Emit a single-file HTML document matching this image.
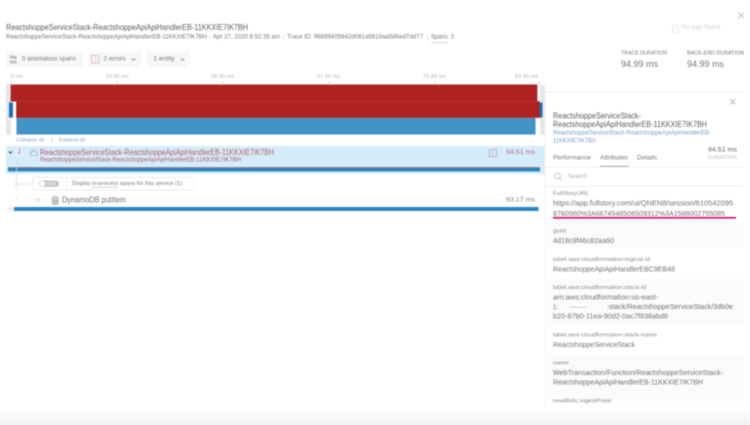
<!DOCTYPE html>
<html><head><meta charset="utf-8"><style>
html,body{margin:0;padding:0;background:#fff;width:750px;height:425px;overflow:hidden}
svg{display:block;filter:blur(.45px)}
text{font-family:"Liberation Sans",sans-serif;font-size:6px;fill:#777;dominant-baseline:central}
.t{font-size:8.4px;fill:#5c5c5c}
.a{font-size:5.4px;fill:#b5b5b5}
.l{font-size:5.8px;fill:#888}
.v{font-size:7.6px;fill:#727272}
</style></head><body>
<svg width="750" height="425" viewBox="0 0 750 425" xmlns="http://www.w3.org/2000/svg">
<defs><linearGradient id="g" x1="0" y1="0" x2="0" y2="1"><stop offset="0" stop-color="#fff"/><stop offset="1" stop-color="#f1f2f2"/></linearGradient></defs>
<rect width="750" height="425" fill="#fff"/>

<!-- header -->
<text class="t" x="6" y="27" textLength="242" lengthAdjust="spacingAndGlyphs">ReactshoppeServiceStack-ReactshoppeApiApiHandlerEB-11KKXIE7IK7BH</text>
<text x="6" y="37.5" textLength="201" lengthAdjust="spacingAndGlyphs">ReactshoppeServiceStack-ReactshoppeApiApiHandlerEB-11KKXIE7IK7BH</text>
<rect x="209.5" y="35" width=".6" height="5" fill="#ccc"/>
<text x="213" y="37.5" textLength="67" lengthAdjust="spacingAndGlyphs">Apr 27, 2020 8:52:35 am</text>
<rect x="283" y="35" width=".6" height="5" fill="#ccc"/>
<text x="287" y="37.5" textLength="136" lengthAdjust="spacingAndGlyphs">Trace ID: 96889405842d081a5618aa586ed7dd77</text>
<rect x="427" y="35" width=".6" height="5" fill="#ccc"/>
<text x="431" y="37.5" textLength="23" lengthAdjust="spacingAndGlyphs">Spans: 3</text>
<rect x="431" y="42" width="17" height=".6" fill="#bbb"/>

<!-- close + logs -->
<path d="M738 12.5l6 6M744 12.5l-6 6" stroke="#aaa" stroke-width=".6" fill="none"/>
<path d="M672.5 25h3.5l1.8 1.8v5.7h-5.3z" fill="none" stroke="#ddd" stroke-width=".6"/>
<text x="682" y="28" textLength="38" lengthAdjust="spacingAndGlyphs" style="fill:#d2d2d2">No logs found</text>
<text x="621" y="53.5" textLength="46" lengthAdjust="spacingAndGlyphs" style="font-size:5px;fill:#777">TRACE DURATION</text>
<text x="687" y="53.5" textLength="57" lengthAdjust="spacingAndGlyphs" style="font-size:5px;fill:#777">BACK-END DURATION</text>
<text x="621" y="64" textLength="37" lengthAdjust="spacingAndGlyphs" style="font-size:9px;fill:#757575">94.99 ms</text>
<text x="687" y="64" textLength="37" lengthAdjust="spacingAndGlyphs" style="font-size:9px;fill:#757575">94.99 ms</text>

<!-- buttons -->
<rect x="6" y="52" width="77" height="15" rx="1.5" fill="#f6f7f7"/>
<rect x="88" y="52" width="54" height="15" rx="1.5" fill="#f6f7f7"/>
<rect x="146" y="52" width="44" height="15" rx="1.5" fill="#f6f7f7"/>
<g fill="none" stroke="#888" stroke-width=".6">
<circle cx="11.5" cy="57" r="1.2"/><path d="M15 55.8l1.4 2.4h-2.8z"/><circle cx="11.5" cy="62" r="1.2"/><circle cx="15" cy="62" r="1.2"/>
</g>
<text x="22" y="59.5" textLength="54" lengthAdjust="spacingAndGlyphs">0 anomalous spans</text>
<rect x="91.5" y="55.5" width="7.5" height="7.5" fill="none" stroke="#dca5a5" stroke-width=".7"/>
<path d="M95.2 57v3M95.2 61v.8" stroke="#dca5a5" stroke-width=".6"/>
<text x="103.5" y="59.5" textLength="22" lengthAdjust="spacingAndGlyphs">2 errors</text>
<path d="M131.5 58.6l2 1.8 2-1.8" fill="none" stroke="#777" stroke-width=".7"/>
<text x="153.5" y="59.5" textLength="21" lengthAdjust="spacingAndGlyphs">1 entity</text>
<path d="M180.5 58.6l2 1.8 2-1.8" fill="none" stroke="#777" stroke-width=".7"/>

<!-- axis -->
<text class="a" x="11" y="77" textLength="12" lengthAdjust="spacingAndGlyphs">0 ms</text>
<text class="a" x="105.5" y="77" textLength="23" lengthAdjust="spacingAndGlyphs">19.00 ms</text>
<text class="a" x="211" y="77" textLength="23" lengthAdjust="spacingAndGlyphs">38.00 ms</text>
<text class="a" x="317" y="77" textLength="23" lengthAdjust="spacingAndGlyphs">57.00 ms</text>
<text class="a" x="423" y="77" textLength="23" lengthAdjust="spacingAndGlyphs">75.99 ms</text>
<text class="a" x="515" y="77" textLength="23" lengthAdjust="spacingAndGlyphs">94.99 ms</text>
<rect x="6" y="84" width="534" height=".7" fill="#ccc"/>
<g fill="#bbb"><rect x="11" y="81" width=".6" height="3"/><rect x="116.5" y="81" width=".6" height="3"/><rect x="222.5" y="81" width=".6" height="3"/><rect x="328.5" y="81" width=".6" height="3"/><rect x="434.5" y="81" width=".6" height="3"/><rect x="539" y="81" width=".6" height="3"/></g>

<!-- minimap -->
<rect x="6" y="85" width="5" height="50" fill="#e5e7e7"/>
<rect x="540" y="85" width="5" height="50" fill="#e6e7e7"/>
<rect x="11" y="85" width="526" height="16.5" fill="#ae2222" stroke="#b01010" stroke-width=".6"/>
<rect x="11" y="101.5" width="6" height="33" fill="#fff"/>
<rect x="16.5" y="101.5" width="523" height="16" fill="#ae2222" stroke="#b01010" stroke-width=".6"/>
<rect x="16.5" y="101.2" width="521" height=".5" fill="#c24a4a"/>
<rect x="16.5" y="118" width="519" height="16.5" fill="#4293c6"/>
<rect x="9" y="102.5" width="4" height="15" fill="#1a73b8"/>
<rect x="539.5" y="102.5" width="3" height="15" fill="#1a73b8"/>

<!-- links -->
<text x="16" y="140.5" textLength="28" lengthAdjust="spacingAndGlyphs" style="font-size:5.4px;fill:#8aa5cc">Collapse all</text>
<rect x="51.5" y="138" width=".6" height="4.5" fill="#bbb"/>
<text x="59" y="140.5" textLength="26" lengthAdjust="spacingAndGlyphs" style="font-size:5.4px;fill:#8aa5cc">Expand all</text>

<!-- selected row -->
<rect x="6" y="146" width="539" height="28" fill="#d5ecfa"/>
<rect x="15.5" y="148.5" width="8" height="8" fill="#e2f2fc"/>
<path d="M8.7 151.5l1.7 1.6 1.7-1.6" fill="none" stroke="#444" stroke-width=".9"/>
<text x="17.8" y="152.5" style="font-size:6px;fill:#b2535f">2</text>
<path d="M31.5 155.5h4.7a1.6 1.6 0 0 0 .2-3.1 2.4 2.4 0 0 0-4.5-.6 1.9 1.9 0 0 0-.4 3.7z" fill="none" stroke="#b98a95" stroke-width=".6"/>
<text x="40" y="152.5" textLength="234" lengthAdjust="spacingAndGlyphs" style="font-size:8px;fill:#b65c69">ReactshoppeServiceStack-ReactshoppeApiApiHandlerEB-11KKXIE7IK7BH</text>
<text x="40" y="160.5" textLength="201" lengthAdjust="spacingAndGlyphs" style="fill:#b65c69">ReactshoppeServiceStack-ReactshoppeApiApiHandlerEB-11KKXIE7IK7BH</text>
<rect x="489.5" y="149.5" width="7" height="7" fill="none" stroke="#b79aa8" stroke-width=".7"/>
<path d="M493 151v2.4M493 154.2v.8" stroke="#b79aa8" stroke-width=".6"/>
<text x="506" y="152.5" textLength="29" lengthAdjust="spacingAndGlyphs" style="font-size:6.4px;fill:#b86d78">94.51 ms</text>
<rect x="8" y="167.5" width="532" height="4" fill="#2e86bd"/>
<rect x="8" y="167.2" width="532" height=".7" fill="#a5606a"/>

<!-- tree -->
<path d="M16.5 157v27" stroke="#ddd" stroke-width=".7" fill="none"/>
<path d="M16.5 184v16h20" stroke="#ccc" stroke-width=".6" stroke-dasharray="1 1" fill="none"/>
<path d="M18 184h15" stroke="#ddd" stroke-width=".7"/>
<circle cx="16.5" cy="184" r="1.5" fill="#fff" stroke="#ccc" stroke-width=".6"/>
<circle cx="38" cy="200" r="1.6" fill="#fff" stroke="#ccc" stroke-width=".6"/>

<!-- toggle row -->
<rect x="33" y="177.5" width="161" height="12.5" rx="1" fill="#fff" stroke="#e8e8e8" stroke-width=".7"/>
<rect x="66.5" y="177.5" width=".6" height="12.5" fill="#e8e8e8"/>
<rect x="39" y="180.5" width="20" height="6.5" rx="3.2" fill="#c4c6c6"/>
<circle cx="42.5" cy="183.7" r="3" fill="#fff" stroke="#bbb" stroke-width=".4"/>
<text x="47" y="183.8" style="font-size:4.5px;fill:#fff">OFF</text>
<text x="72" y="184" textLength="110" lengthAdjust="spacingAndGlyphs" style="font-size:5.8px">Display in-process spans for this service (1)</text>
<rect x="92" y="187" width="26" height=".5" fill="#aaa"/>

<!-- dynamo row -->
<path d="M52.5 198c0-2 5.5-2 5.5 0v5.5c0 1.4-5.5 1.4-5.5 0z" fill="#d0d2d2" stroke="#888" stroke-width=".6"/>
<path d="M52.5 200.5h5.5M52.5 202h5.5" stroke="#888" stroke-width=".4"/>
<text x="62" y="200" textLength="64" lengthAdjust="spacingAndGlyphs" style="font-size:7.8px;fill:#707070">DynamoDB putItem</text>
<text x="506" y="200" textLength="29" lengthAdjust="spacingAndGlyphs" style="font-size:6.4px;fill:#808080">93.17 ms</text>
<rect x="8" y="207" width="6" height="4" fill="#eceeee"/>
<rect x="14" y="207" width="524.5" height="4" fill="#2e86bd"/>

<!-- right panel -->
<rect x="545" y="92" width="205" height="333" fill="#fff"/>
<rect x="545" y="91.5" width="200" height=".7" fill="#e6e6e6"/>
<rect x="544.5" y="92" width=".8" height="333" fill="#f0f0f0"/>
<path d="M730 99l5.5 5.5M735.5 99l-5.500 5.500" stroke="#999" stroke-width=".6" fill="none"/>
<text class="t" x="553" y="116" textLength="88" lengthAdjust="spacingAndGlyphs" style="font-size:7.8px">ReactshoppeServiceStack-</text>
<text class="t" x="553" y="124.5" textLength="154" lengthAdjust="spacingAndGlyphs" style="font-size:7.8px">ReactshoppeApiApiHandlerEB-11KKXIE7IK7BH</text>
<text x="553" y="133.5" textLength="158" lengthAdjust="spacingAndGlyphs" style="fill:#7b9cd0">ReactshoppeServiceStack-ReactshoppeApiApiHandlerEB-</text>
<text x="553" y="141.5" textLength="43" lengthAdjust="spacingAndGlyphs" style="fill:#7b9cd0">11KKXIE7IK7BH</text>
<text x="708" y="150" textLength="29" lengthAdjust="spacingAndGlyphs" style="font-size:6.6px;fill:#606060">94.51 ms</text>
<text x="707.5" y="158" textLength="29.5" lengthAdjust="spacingAndGlyphs" style="font-size:5.4px;fill:#c0c0c0">DURATION</text>
<text x="553" y="158" textLength="38" lengthAdjust="spacingAndGlyphs" style="font-size:6.2px">Performance</text>
<text x="600" y="158" textLength="28" lengthAdjust="spacingAndGlyphs" style="font-size:6.2px">Attributes</text>
<text x="637" y="158" textLength="20" lengthAdjust="spacingAndGlyphs" style="font-size:6.2px">Details</text>
<rect x="545" y="166.5" width="199" height=".7" fill="#e8e8e8"/>
<rect x="600" y="165.8" width="28.5" height="1" fill="#aaa"/>
<circle cx="557.5" cy="176" r="2.8" fill="none" stroke="#aaa" stroke-width=".6"/>
<path d="M559.5 178l2.5 2.5" stroke="#aaa" stroke-width=".6"/>
<text x="568" y="177" textLength="19" lengthAdjust="spacingAndGlyphs" style="fill:#b0b0b0">Search</text>
<rect x="545" y="186" width="199" height=".7" fill="#e8e8e8"/>

<rect x="545" y="222" width="199" height="25" fill="#fafbfb"/>
<rect x="545" y="279" width="199" height="47" fill="#fafbfb"/>
<rect x="545" y="354" width="199" height="47" fill="#fafbfb"/>

<text class="l" x="553" y="194" textLength="36" lengthAdjust="spacingAndGlyphs">FullStoryURL</text>
<text class="v" x="553" y="203" textLength="180" lengthAdjust="spacingAndGlyphs">https://app.fullstory.com/ui/QNEN8/session/610542095</text>
<text class="v" x="553" y="213.5" textLength="172" lengthAdjust="spacingAndGlyphs">8760960%3A6674548506509312%3A1588002755085</text>
<rect x="553" y="217" width="183" height="1.6" fill="#ee0060"/>

<text class="l" x="553" y="231.5" textLength="13" lengthAdjust="spacingAndGlyphs">guid</text>
<text class="v" x="553" y="240.5" textLength="61" lengthAdjust="spacingAndGlyphs">4d18c9f46c82aa60</text>

<text class="l" x="553" y="260" textLength="97" lengthAdjust="spacingAndGlyphs">label.aws:cloudformation:logical-id</text>
<text class="v" x="553" y="269" textLength="122" lengthAdjust="spacingAndGlyphs">ReactshoppeApiApiHandlerEBC9EB48</text>

<text class="l" x="553" y="288" textLength="93" lengthAdjust="spacingAndGlyphs">label.aws:cloudformation:stack-id</text>
<text class="v" x="553" y="297" textLength="105" lengthAdjust="spacingAndGlyphs">arn:aws:cloudformation:us-east-</text>
<text class="v" x="553" y="306.5" textLength="5" lengthAdjust="spacingAndGlyphs">1:</text>
<rect x="570" y="307" width="16" height=".5" fill="#aaa"/>
<text class="v" x="607" y="306.5" textLength="126" lengthAdjust="spacingAndGlyphs">:stack/ReactshoppeServiceStack/3db0e</text>
<text class="v" x="553" y="316" textLength="115" lengthAdjust="spacingAndGlyphs">b20-87b0-11ea-90d2-0ac7f938abd6</text>

<text class="l" x="553" y="335.5" textLength="104" lengthAdjust="spacingAndGlyphs">label.aws:cloudformation:stack-name</text>
<text class="v" x="553" y="344.5" textLength="82" lengthAdjust="spacingAndGlyphs">ReactshoppeServiceStack</text>

<text class="l" x="553" y="363.5" textLength="16" lengthAdjust="spacingAndGlyphs">name</text>
<text class="v" x="553" y="372.5" textLength="170" lengthAdjust="spacingAndGlyphs">WebTransaction/Function/ReactshoppeServiceStack-</text>
<text class="v" x="553" y="382" textLength="150" lengthAdjust="spacingAndGlyphs">ReactshoppeApiApiHandlerEB-11KKXIE7IK7BH</text>

<text class="l" x="553" y="401.5" textLength="58" lengthAdjust="spacingAndGlyphs">newRelic.ingestPoint</text>

<rect x="0" y="408" width="750" height="17" fill="url(#g)"/>
</svg>
</body></html>
